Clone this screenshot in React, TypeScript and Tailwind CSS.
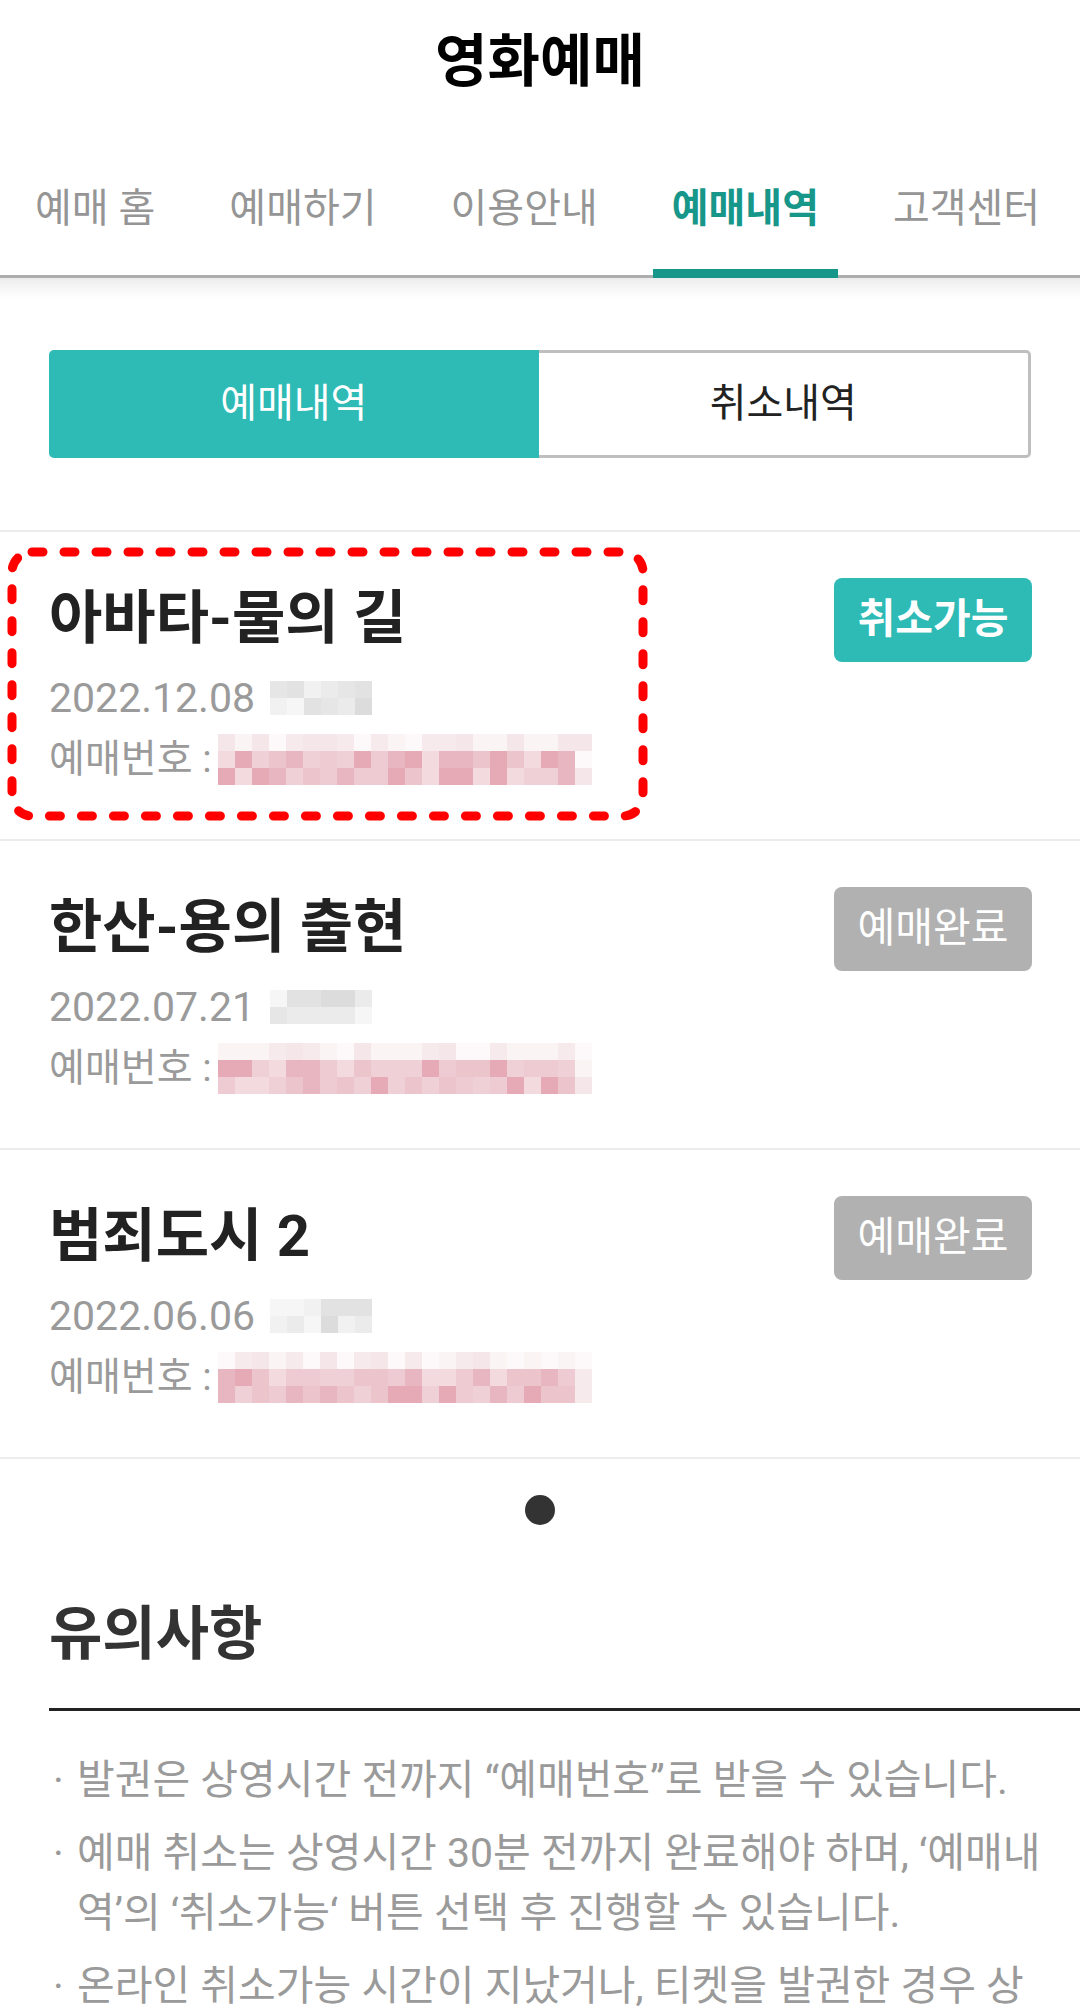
import { useMemo } from 'react'

// ─── Types ────────────────────────────────────────────────────────────────────

type Status = 'cancelable' | 'done'

interface Booking {
  id: number
  title: string
  date: string
  status: Status
  seed: number
}

// ─── Data ─────────────────────────────────────────────────────────────────────

const TABS = ['예매 홈', '예매하기', '이용안내', '예매내역', '고객센터']
const ACTIVE_TAB = 3

const BOOKINGS: Booking[] = [
  { id: 1, title: '아바타-물의 길', date: '2022.12.08', status: 'cancelable', seed: 7 },
  { id: 2, title: '한산-용의 출현', date: '2022.07.21', status: 'done', seed: 19 },
  { id: 3, title: '범죄도시 2', date: '2022.06.06', status: 'done', seed: 41 },
]

const NOTICES = [
  '발권은 상영시간 전까지 “예매번호”로 받을 수 있습니다.',
  '예매 취소는 상영시간 30분 전까지 완료해야 하며, ‘예매내역’의 ‘취소가능‘ 버튼 선택 후 진행할 수 있습니다.',
  '온라인 취소가능 시간이 지났거나, 티켓을 발권한 경우 상영관 매표소에서 취소할 수 있습니다.',
]

const FONT = { fontFamily: 'Roboto, "Noto Sans CJK KR", sans-serif' }

// ─── Helpers ──────────────────────────────────────────────────────────────────

function rng(seed: number) {
  let s = seed
  return () => {
    s = (s * 9301 + 49297) % 233280
    return s / 233280
  }
}

const GRAYS = ['#f1f1f1', '#ebebeb', '#e6e6e6', '#e2e2e2', '#dcdcdc', '#f6f6f6']
const PINK_FAINT = ['#fbf4f5', '#f7eaed', '#f5e6e9', '#fdf9fa']
const PINK = ['#efd0d6', '#ecc4cc', '#e8b6c0', '#f2dade', '#e5aab5', '#eecbd2']

function makeCells(seed: number, cols: number, rows: number, kind: 'gray' | 'pink') {
  const r = rng(seed)
  const cells: string[] = []
  for (let y = 0; y < rows; y++) {
    for (let x = 0; x < cols; x++) {
      const v = r()
      if (kind === 'gray') {
        cells.push(GRAYS[Math.floor(v * GRAYS.length)])
      } else if (y === 0 || x === cols - 1) {
        cells.push(PINK_FAINT[Math.floor(v * PINK_FAINT.length)])
      } else {
        cells.push(PINK[Math.floor(v * PINK.length)])
      }
    }
  }
  return cells
}

// ─── Mosaic (blurred private data) ────────────────────────────────────────────

function Mosaic({ seed, cols, rows, kind }: { seed: number; cols: number; rows: number; kind: 'gray' | 'pink' }) {
  const cells = useMemo(() => makeCells(seed, cols, rows, kind), [seed, cols, rows, kind])
  return (
    <div className="grid" style={{ gridTemplateColumns: `repeat(${cols}, 17px)` }}>
      {cells.map((c, i) => (
        <div key={i} className="h-[17px] w-[17px]" style={{ background: c }} />
      ))}
    </div>
  )
}

// ─── Booking row ──────────────────────────────────────────────────────────────

function BookingRow({ b, highlight }: { b: Booking; highlight?: boolean }) {
  const cancelable = b.status === 'cancelable'
  return (
    <div className="relative flex h-[309px] items-start justify-between border-b-2 border-[#ececec] pt-[46px] pl-[49px] pr-[48px]">
      <div className="flex flex-col pt-[13px]">
        <p className="h-[54px] text-[58px] font-bold leading-[54px] whitespace-nowrap text-[#222]">{b.title}</p>
        <div className="mt-[28px] flex h-[50px] items-center">
          <span className="text-[41px] leading-[50px] text-[#9a9a9a]">{b.date}</span>
          <div className="ml-[15px]">
            <Mosaic seed={b.seed} cols={6} rows={2} kind="gray" />
          </div>
        </div>
        <div className="mt-[11px] flex h-[50px] items-center">
          <span className="text-[39px] leading-[50px] text-[#9a9a9a]">예매번호 :</span>
          <div className="ml-[6px]">
            <Mosaic seed={b.seed + 3} cols={22} rows={3} kind="pink" />
          </div>
        </div>
      </div>

      <div
        className={
          cancelable
            ? 'flex h-[84px] w-[198px] items-center justify-center rounded-[8px] bg-[#2ebab5] text-[41px] font-bold text-white'
            : 'flex h-[84px] w-[198px] items-center justify-center rounded-[8px] bg-[#b1b1b1] text-[41px] text-white'
        }
      >
        {cancelable ? '취소가능' : '예매완료'}
      </div>

      {/* red annotation box */}
      {highlight && (
        <svg className="pointer-events-none absolute left-0 top-0" width="660" height="300" viewBox="0 0 660 300">
          <rect
            x="12"
            y="20"
            width="631"
            height="264"
            rx="20"
            fill="none"
            stroke="#ff0000"
            strokeWidth="9"
            strokeDasharray="11 21"
            strokeLinecap="round"
          />
        </svg>
      )}
    </div>
  )
}

// ─── App ──────────────────────────────────────────────────────────────────────

export default function App() {
  return (
    <div className="min-h-screen w-[1080px] overflow-hidden bg-white" style={FONT}>
      {/* ── Header ─────────────────────────────────────────────────────────── */}
      <div className="flex h-[122px] items-center justify-center">
        <h1 className="text-[57px] font-bold leading-none text-black">영화예매</h1>
      </div>

      {/* ── Tabs ───────────────────────────────────────────────────────────── */}
      <nav className="flex gap-[36px] border-b-[3px] border-[#adadad] pl-[16px]">
        {TABS.map((t, i) => (
          <div
            key={t}
            className={
              i === ACTIVE_TAB
                ? 'relative whitespace-nowrap px-[19px] pt-[62px] pb-[41px] text-[40px] font-bold leading-[50px] text-[#17968a]'
                : 'relative whitespace-nowrap px-[19px] pt-[62px] pb-[41px] text-[40px] leading-[50px] text-[#959595]'
            }
          >
            {t}
            {i === ACTIVE_TAB && <div className="absolute bottom-[-3px] left-0 right-0 h-[9px] bg-[#17968a]" />}
          </div>
        ))}
      </nav>
      <div className="h-[20px] bg-linear-to-b from-[#ececec] to-white" />

      {/* ── Segmented control ──────────────────────────────────────────────── */}
      <div className="mx-[49px] mt-[52px] flex h-[108px]">
        <div className="flex flex-1 items-center justify-center rounded-l-[5px] bg-[#2ebab5] text-[40px] text-white">
          예매내역
        </div>
        <div className="flex flex-1 items-center justify-center rounded-r-[5px] border-[3px] border-l-0 border-[#bfbfbf] bg-white text-[40px] text-[#222]">
          취소내역
        </div>
      </div>

      {/* ── Booking list ───────────────────────────────────────────────────── */}
      <div className="mt-[72px] border-t-2 border-[#ececec]">
        {BOOKINGS.map((b, i) => (
          <BookingRow key={b.id} b={b} highlight={i === 0} />
        ))}
      </div>

      {/* pager dot */}
      <div className="mx-auto mt-[36px] h-[30px] w-[30px] rounded-full bg-[#333]" />

      {/* ── Notices ────────────────────────────────────────────────────────── */}
      <h2 className="mt-[79px] pl-[49px] text-[58px] font-bold leading-[60px] text-[#333]">유의사항</h2>
      <div className="ml-[49px] mt-[44px] h-[3px] bg-[#222]" />
      <ul className="mt-[39px] flex flex-col gap-[13px] pl-[49px] pr-[36px] pb-[40px]">
        {NOTICES.map((n) => (
          <li key={n} className="flex text-[41px] leading-[60px] text-[#9a9a9a]">
            <span className="w-[28px] flex-none pl-[4px]">·</span>
            <span className="flex-1">{n}</span>
          </li>
        ))}
      </ul>
    </div>
  )
}
